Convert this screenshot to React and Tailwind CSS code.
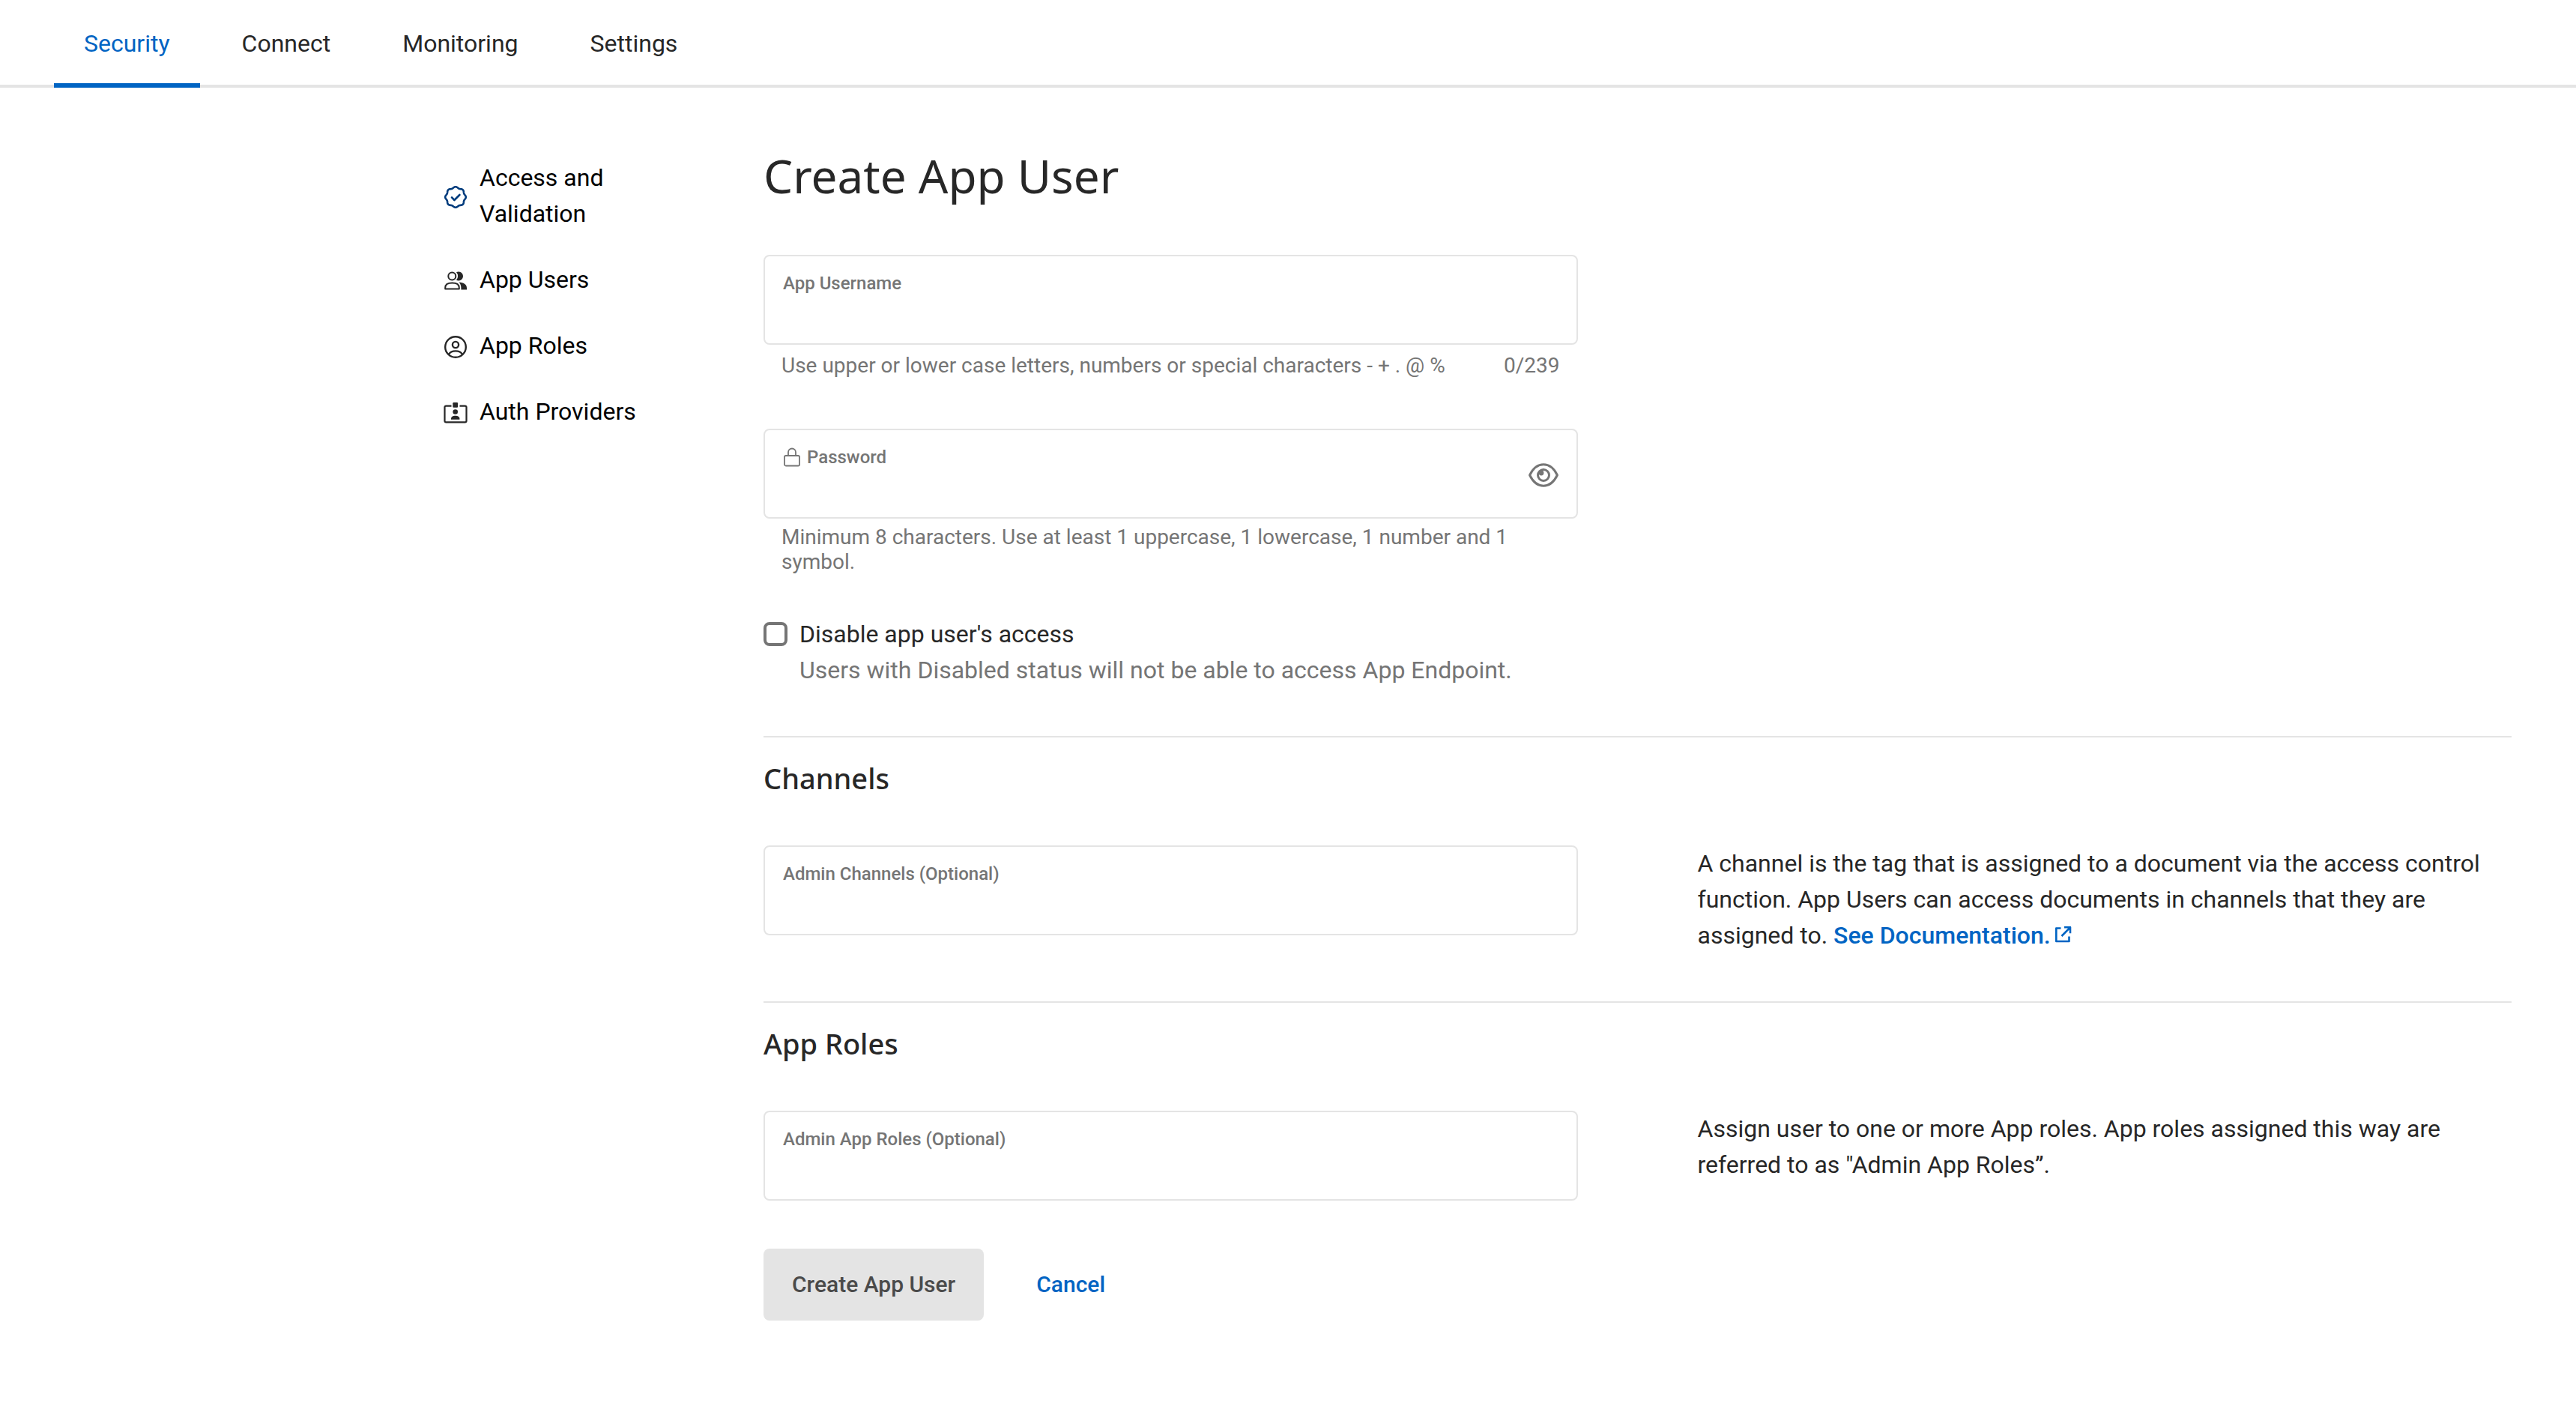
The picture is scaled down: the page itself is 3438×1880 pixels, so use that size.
const tabs = ["Security", "Connect", "Monitoring", "Settings"];

function VerifiedIcon() {
  const points = [];
  for (let i = 0; i <= 96; i++) {
    const a = (i / 96) * Math.PI * 2;
    const r = 13 + 0.8 * Math.cos(a * 8);
    points.push(`${(16 + r * Math.sin(a)).toFixed(2)} ${(16 - r * Math.cos(a)).toFixed(2)}`);
  }
  return (
    <svg viewBox="0 0 32 32" className="mt-1 size-8 shrink-0" fill="none" stroke="#003c7d" strokeWidth="2.6" strokeLinecap="round" strokeLinejoin="round" aria-hidden="true">
      <path d={`M${points.join("L")}Z`} />
      <path d="M11 16.400l3.400 3.600L21.400 13" />
    </svg>
  );
}

function UsersIcon() {
  return (
    <svg viewBox="0 0 32 32" className="mt-1 size-8 shrink-0" aria-hidden="true">
      <circle cx="11.300" cy="9.500" r="5" fill="none" stroke="#272727" strokeWidth="2" />
      <path d="M2.200 26.500v-1.600c0-4.400 3.900-6.400 9.300-6.400s9.300 2 9.300 6.400v1.600z" fill="none" stroke="#272727" strokeWidth="2" strokeLinejoin="round" />
      <path d="M17 4.300a6 6 0 1 1 0 10.400a7.500 7.500 0 0 0 0-10.400z" fill="#272727" />
      <path d="M20.500 17.700c6 0 10.500 2.600 10.500 7.600v2.200h-7.600v-2.400c0-3-.9-5.400-2.900-7.400z" fill="#272727" />
    </svg>
  );
}

function RoleIcon() {
  return (
    <svg viewBox="0 0 32 32" className="mt-1 size-8 shrink-0" fill="none" stroke="#272727" strokeWidth="2.400" aria-hidden="true">
      <circle cx="16" cy="16" r="13.800" />
      <circle cx="16" cy="13" r="4.100" />
      <path d="M6.800 26c1.600-3 5-4.600 9.200-4.600s7.600 1.600 9.200 4.600" />
    </svg>
  );
}

function AuthIcon() {
  return (
    <svg viewBox="0 0 32 32" className="mt-1 size-8 shrink-0" aria-hidden="true">
      <path d="M10.500 6.600H3.200a1.700 1.700 0 0 0-1.700 1.700v18.400a1.700 1.700 0 0 0 1.700 1.700h25.600a1.700 1.700 0 0 0 1.700-1.700V8.300a1.700 1.700 0 0 0-1.700-1.700h-7.300" fill="none" stroke="#272727" strokeWidth="2.200" />
      <rect x="12.300" y="2" width="6.800" height="6.800" rx="1.200" fill="#272727" />
      <circle cx="15.700" cy="14.500" r="3.300" fill="#272727" />
      <path d="M10 24.800v-1c0-2.600 2.400-4 5.700-4s5.700 1.400 5.700 4v1z" fill="#272727" />
    </svg>
  );
}

function LockIcon() {
  return (
    <svg viewBox="0 0 24 26" className="h-[26px] w-6 shrink-0" fill="none" stroke="#757575" strokeWidth="1.800" aria-hidden="true">
      <rect x="2" y="11" width="20" height="13.500" rx="1.800" />
      <path d="M7 11V6.500a5 5 0 0 1 10 0V11" />
    </svg>
  );
}

function EyeIcon() {
  return (
    <svg viewBox="0 0 40 32" className="mt-1 h-8 w-10" fill="none" stroke="#757575" strokeWidth="3" aria-hidden="true">
      <path d="M1.600 16C6 7 12 1.800 20 1.800S34 7 38.400 16C34 25 28 30.200 20 30.200S6 25 1.600 16z" strokeLinejoin="round" />
      <circle cx="20" cy="16" r="7.500" />
      <circle cx="17" cy="13" r="3.400" fill="#757575" stroke="none" />
    </svg>
  );
}

function ExternalIcon() {
  return (
    <svg viewBox="0 0 24 24" className="ml-1 inline-block size-6 align-baseline" fill="none" stroke="#0064c3" strokeWidth="2.600" strokeLinejoin="round" aria-hidden="true">
      <path d="M9.500 3.500H3.300V21H20.500V14.500" />
      <path d="M14 2.300h8v8M21.500 2.800L10.500 14" />
      <path d="M17 1.500h6v6z" fill="#0064c3" stroke="none" />
    </svg>
  );
}

const sideItems = [
  { label: "Access and Validation", Icon: VerifiedIcon },
  { label: "App Users", Icon: UsersIcon },
  { label: "App Roles", Icon: RoleIcon },
  { label: "Auth Providers", Icon: AuthIcon },
];

function Field({ id, label, type = "text", icon, action }) {
  return (
    <div className="flex h-[120px] items-center rounded-lg border-2 border-[#e4e4e4] px-6">
      <div className="flex h-full grow flex-col pt-5">
        <label htmlFor={id} className="flex items-center gap-2 text-2xl leading-8 font-medium text-[#757575]">
          {icon}
          {label}
        </label>
        <input id={id} type={type} className="w-full grow text-[32px] text-[#272727] outline-none" />
      </div>
      {action}
    </div>
  );
}

function Section({ title, children, note }) {
  return (
    <section className="border-t-2 border-[#e4e4e4] pt-7 pb-16">
      <h2 className="font-['Noto_Sans'] text-[38px] leading-[52px] font-medium">{title}</h2>
      <div className="mt-16 grid grid-cols-2 gap-40">
        {children}
        <p>{note}</p>
      </div>
    </section>
  );
}

export default function App() {
  return (
    <div className="min-h-screen bg-white font-[Roboto,sans-serif] text-[32px] leading-[48px] text-[#272727]">
      <nav className="flex h-[117px] border-b-4 border-[#e4e4e4] pl-[72px]">
        {tabs.map((tab, i) => (
          <a
            key={tab}
            href="#"
            className={
              i === 0
                ? "-mb-1 flex items-center border-b-[6px] border-[#0064c3] px-10 pt-1 text-[#0064c3]"
                : "-mb-1 ml-4 flex items-center border-b-[6px] border-transparent px-10 pt-1"
            }
          >
            {tab}
          </a>
        ))}
      </nav>

      <div className="mr-[86px] ml-auto flex max-w-[2760px] gap-40 pt-24">
        <aside className="w-[267px] shrink-0">
          <ul className="flex flex-col gap-10">
            {sideItems.map(({ label, Icon }) => (
              <li key={label}>
                <a href="#" className="flex items-center gap-4 text-black">
                  <Icon />
                  {label}
                </a>
              </li>
            ))}
          </ul>
        </aside>

        <main className="grow">
          <form>
            <h1 className="font-['Noto_Sans'] text-[62px] leading-[43px]">Create App User</h1>

            <div className="mt-[84px] grid grid-cols-2 gap-40">
              <div>
                <Field id="username" label="App Username" />
                <div className="mt-3 flex justify-between px-6 text-[28px] leading-8 text-[#757575]">
                  <p>Use upper or lower case letters, numbers or special characters - + . @ %</p>
                  <p>0/239</p>
                </div>

                <div className="mt-[68px]">
                  <Field
                    id="password"
                    label="Password"
                    type="password"
                    icon={<LockIcon />}
                    action={
                      <button type="button" aria-label="Show password">
                        <EyeIcon />
                      </button>
                    }
                  />
                </div>
                <p className="mt-2 px-6 text-[28px] leading-[33px] text-[#757575]">
                  Minimum 8 characters. Use at least 1 uppercase, 1 lowercase, 1 number and 1 symbol.
                </p>

                <div className="mt-14 flex gap-4">
                  <input
                    id="disable"
                    type="checkbox"
                    className="mt-2 size-8 shrink-0 appearance-none rounded-lg border-4 border-[#757575] checked:bg-[#0064c3]"
                  />
                  <div>
                    <label htmlFor="disable">Disable app user's access</label>
                    <p className="text-[#757575]">Users with Disabled status will not be able to access App Endpoint.</p>
                  </div>
                </div>
              </div>
            </div>

            <div className="mt-16">
              <Section
                title="Channels"
                note={
                  <>
                    A channel is the tag that is assigned to a document via the access control function. App Users can
                    access documents in channels that they are assigned to.{" "}
                    <a href="#" className="font-medium text-[#0064c3]">
                      See Documentation.
                      <ExternalIcon />
                    </a>
                  </>
                }
              >
                <Field id="channels" label="Admin Channels (Optional)" />
              </Section>
              <Section
                title="App Roles"
                note={
                  <>Assign user to one or more App roles. App roles assigned this way are referred to as "Admin App Roles”.</>
                }
              >
                <Field id="roles" label="Admin App Roles (Optional)" />
              </Section>
            </div>

            <div className="flex gap-8 text-[30px] font-medium">
              <button type="button" className="h-24 rounded-lg bg-[#e4e4e4] px-[38px] text-[#4a4a4a]">
                Create App User
              </button>
              <button type="button" className="h-24 px-[38px] text-[#0064c3]">
                Cancel
              </button>
            </div>
          </form>
        </main>
      </div>
    </div>
  );
}
